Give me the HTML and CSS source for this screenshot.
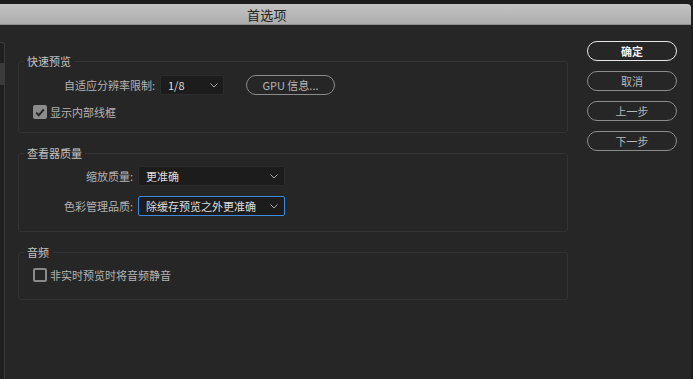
FILE: index.html
```html
<!DOCTYPE html>
<html lang="zh-CN">
<head>
<meta charset="utf-8">
<title>首选项</title>
<link rel="stylesheet" href="styles.css">
</head>
<body>
<div class="topstrip"></div>
<div class="window">
  <div class="titlebar"><span class="title">首选项</span></div>
  <div class="content">
    <div class="sidebar"><div class="thumb"></div></div>
    <div class="main">
      <fieldset class="group g1">
        <legend>快速预览</legend>
        <div class="row">
          <span class="label l1">自适应分辨率限制:</span>
          <div class="select s1"><span>1/8</span><svg class="chev" width="8" height="5" viewBox="0 0 8 5"><path d="M0.5 0.5 L4 4 L7.5 0.5" fill="none" stroke="#a8a8a8" stroke-width="1"/></svg></div>
          <div class="pill gpu">GPU 信息...</div>
        </div>
        <div class="check-row">
          <span class="cb checked"><svg width="10" height="9" viewBox="0 0 10 9"><path d="M1.2 4.6 L3.8 7.2 L8.8 1.4" fill="none" stroke="#262626" stroke-width="2"/></svg></span>
          <span class="cb-label">显示内部线框</span>
        </div>
      </fieldset>
      <fieldset class="group g2">
        <legend>查看器质量</legend>
        <div class="row">
          <span class="label l2">缩放质量:</span>
          <div class="select s2"><span>更准确</span><svg class="chev" width="8" height="5" viewBox="0 0 8 5"><path d="M0.5 0.5 L4 4 L7.5 0.5" fill="none" stroke="#a8a8a8" stroke-width="1"/></svg></div>
        </div>
        <div class="row row2">
          <span class="label l2">色彩管理品质:</span>
          <div class="select s2 focus"><span>除缓存预览之外更准确</span><svg class="chev" width="8" height="5" viewBox="0 0 8 5"><path d="M0.5 0.5 L4 4 L7.5 0.5" fill="none" stroke="#a8a8a8" stroke-width="1"/></svg></div>
        </div>
      </fieldset>
      <fieldset class="group g3">
        <legend>音频</legend>
        <div class="check-row">
          <span class="cb"></span>
          <span class="cb-label">非实时预览时将音频静音</span>
        </div>
      </fieldset>
    </div>
    <div class="buttons">
      <div class="pill btn primary">确定</div>
      <div class="pill btn">取消</div>
      <div class="pill btn">上一步</div>
      <div class="pill btn">下一步</div>
    </div>
  </div>
</div>
</body>
</html>
```
FILE: styles.css
```css
* { box-sizing: border-box; }
html, body {
  margin: 0;
  padding: 0;
  background: #1d1d1d;
  width: 693px;
  height: 379px;
  overflow: hidden;
  font-family: "Noto Sans CJK SC", "Liberation Sans", sans-serif;
  font-size: 11px;
}
.topstrip { height: 4px; background: #1d1d1d; }
.window {
  width: 691px;
  height: 375px;
  display: flex;
  flex-direction: column;
  background: #262626;
  border-top-right-radius: 4px;
}
.titlebar {
  height: 21px;
  background: linear-gradient(#c4c4c4, #acacac);
  border-bottom: 1px solid #8e8e8e;
  border-top-right-radius: 4px;
  display: flex;
  align-items: center;
  padding-left: 247px;
}
.title {
  font-size: 13px;
  color: #222;
  line-height: 21px;
  letter-spacing: 0.3px;
}
.content {
  flex: 1;
  display: flex;
  align-items: flex-start;
}
.sidebar {
  width: 5px;
  height: 340px;
  margin-top: 17px;
  background: #1f1f1f;
  border-top: 1px solid #3a3a3a;
  border-right: 1px solid #3a3a3a;
  border-top-right-radius: 3px;
  padding-top: 20px;
}
.thumb {
  width: 4px;
  height: 22px;
  background: #3b3b3b;
}
.main {
  width: 550px;
  margin-left: 13px;
  padding-top: 29px;
  display: flex;
  flex-direction: column;
  gap: 13px;
}
.group {
  margin: 0;
  border: 1px solid #333;
  border-radius: 3px;
  padding: 0 0 0 14px;
  min-width: 0;
}
.group legend {
  padding: 0 3px;
  margin-left: -9px;
  line-height: 14px;
  color: #c2c2c2;
  font-size: 11px;
}
.g1 { height: 79px; padding-top: 7px; }
.g2 { height: 86px; padding-top: 6px; }
.g3 { height: 55px; padding-top: 8px; }
.row {
  display: flex;
  align-items: center;
  height: 20px;
}
.row2 { margin-top: 10px; }
.label {
  color: #b2b2b2;
  text-align: right;
  margin-right: 5px;
  white-space: nowrap;
}
.l1 { width: 122px; }
.l2 { width: 100px; }
.select {
  height: 20px;
  background: #1c1c1c;
  border: 1px solid #2c2c2c;
  border-radius: 2px;
  display: flex;
  align-items: center;
  justify-content: space-between;
  padding: 0 5px 0 7px;
  color: #dedede;
}
.s1 { width: 64px; }
.s2 { width: 147px; padding-right: 6px; }
.select.focus { border-color: #3b8ce0; }
.chev { display: block; }
.pill {
  border: 1px solid #8c8c8c;
  border-radius: 10px;
  height: 20px;
  display: flex;
  align-items: center;
  justify-content: center;
  color: #b8b8b8;
}
.gpu { width: 89px; margin-left: 22px; }
.check-row {
  display: flex;
  align-items: center;
  height: 14px;
  margin-top: 10px;
}
.g3 .check-row { margin-top: 0; height: 16px; }
.cb {
  width: 14px;
  height: 14px;
  border-radius: 2px;
  border: 2px solid #8a8a8a;
  margin-right: 3px;
  display: flex;
  align-items: center;
  justify-content: center;
}
.cb.checked {
  background: #8c8c8c;
  border-color: #8c8c8c;
}
.cb-label { color: #b4b4b4; }
.buttons {
  margin-left: 19px;
  padding-top: 16px;
  display: flex;
  flex-direction: column;
  gap: 10px;
  width: 90px;
}
.btn { width: 90px; }
.btn.primary {
  border-color: #e8e8e8;
  color: #f2f2f2;
  font-weight: bold;
}
```
